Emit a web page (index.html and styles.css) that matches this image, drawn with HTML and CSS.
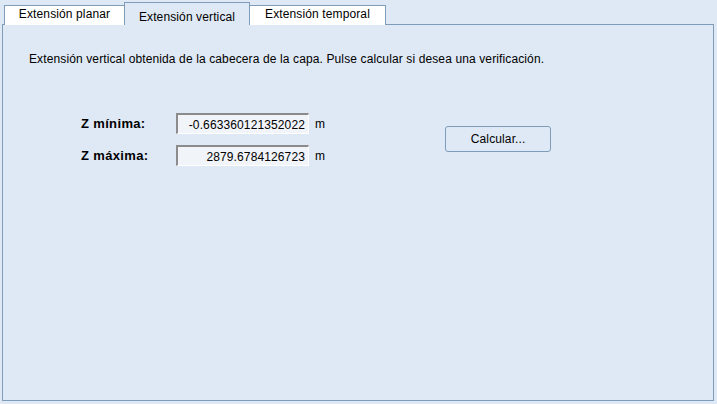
FILE: index.html
```html
<!DOCTYPE html>
<html lang="es">
  <head>
    <meta charset="UTF-8" />
    <title>Extensión vertical</title>
    <link rel="stylesheet" href="styles.css">
  </head>
  <body>
    <div class="window">
      <!-- pestañas -->
      <div class="tabs">
        <div class="tab">Extensión planar</div>
        <div class="tab active">Extensión vertical</div>
        <div class="tab">Extensión temporal</div>
      </div>

      <div class="panel">
        <p class="desc">Extensión vertical obtenida de la cabecera de la capa. Pulse calcular si desea una verificación.</p>

        <div class="form">
          <div class="fields">
            <label class="label">Z mínima:</label>
            <div class="field">-0.663360121352022</div>
            <span class="unit">m</span>

            <label class="label">Z máxima:</label>
            <div class="field">2879.6784126723</div>
            <span class="unit">m</span>
          </div>
          <button class="calc-btn">Calcular...</button>
        </div>
      </div>
    </div>
  </body>
</html>
```

FILE: styles.css
```css
html, body {
  margin: 0;
  padding: 0;
}

body {
  font-family: "Liberation Sans", Arial, sans-serif;
  font-size: 12px;
  letter-spacing: 0.12px;
  color: #000;
  background: #dfe9f5;
  width: 717px;
  height: 404px;
  overflow: hidden;
}

.window {
  padding: 2px 0 0 2px;
}

.tabs {
  display: flex;
  align-items: flex-end;
  height: 22px;
  padding-left: 2px;
  position: relative;
  z-index: 1;
}

.tab {
  box-sizing: border-box;
  height: 20px;
  margin-bottom: -1px;
  margin-left: -1px;
  border: 1px solid #7f9db9;
  border-bottom: none;
  background: #fff;
  text-align: center;
  line-height: 17px;
}

.tab:first-child {
  margin-left: 0;
  width: 121px;
}

.tab.active {
  width: 126px;
  height: 23px;
  background: #dfe9f5;
  padding-top: 6px;
}

.tab:last-child {
  width: 137px;
}

.panel {
  box-sizing: border-box;
  width: 712px;
  height: 377px;
  border: 1px solid #7f9db9;
  padding: 27px 0 0 26px;
}

.desc {
  margin: 0;
  line-height: 15px;
}

.form {
  display: flex;
  align-items: flex-start;
  margin-top: 46px;
  padding-left: 52px;
}

.fields {
  display: grid;
  grid-template-columns: 95px 133px auto;
  row-gap: 11px;
  align-items: center;
}

.label {
  font-weight: bold;
  font-size: 13px;
  letter-spacing: 0.35px;
}

.field {
  box-sizing: border-box;
  height: 21px;
  line-height: 17px;
  padding: 2px 3px 0 0;
  text-align: right;
  background: #f1f4f9;
  border-top: 2px solid #8c8c8c;
  border-left: 2px solid #8c8c8c;
  border-right: 1px solid #fff;
  border-bottom: 1px solid #fff;
}

.unit {
  padding-left: 6px;
}

.calc-btn {
  margin: 13px 0 0 120px;
  width: 106px;
  height: 26px;
  font-family: inherit;
  font-size: 12px;
  letter-spacing: 0.12px;
  color: #000;
  background: #dfe9f5;
  border: 1px solid #7f9db9;
  border-radius: 3px;
  cursor: pointer;
}
```
